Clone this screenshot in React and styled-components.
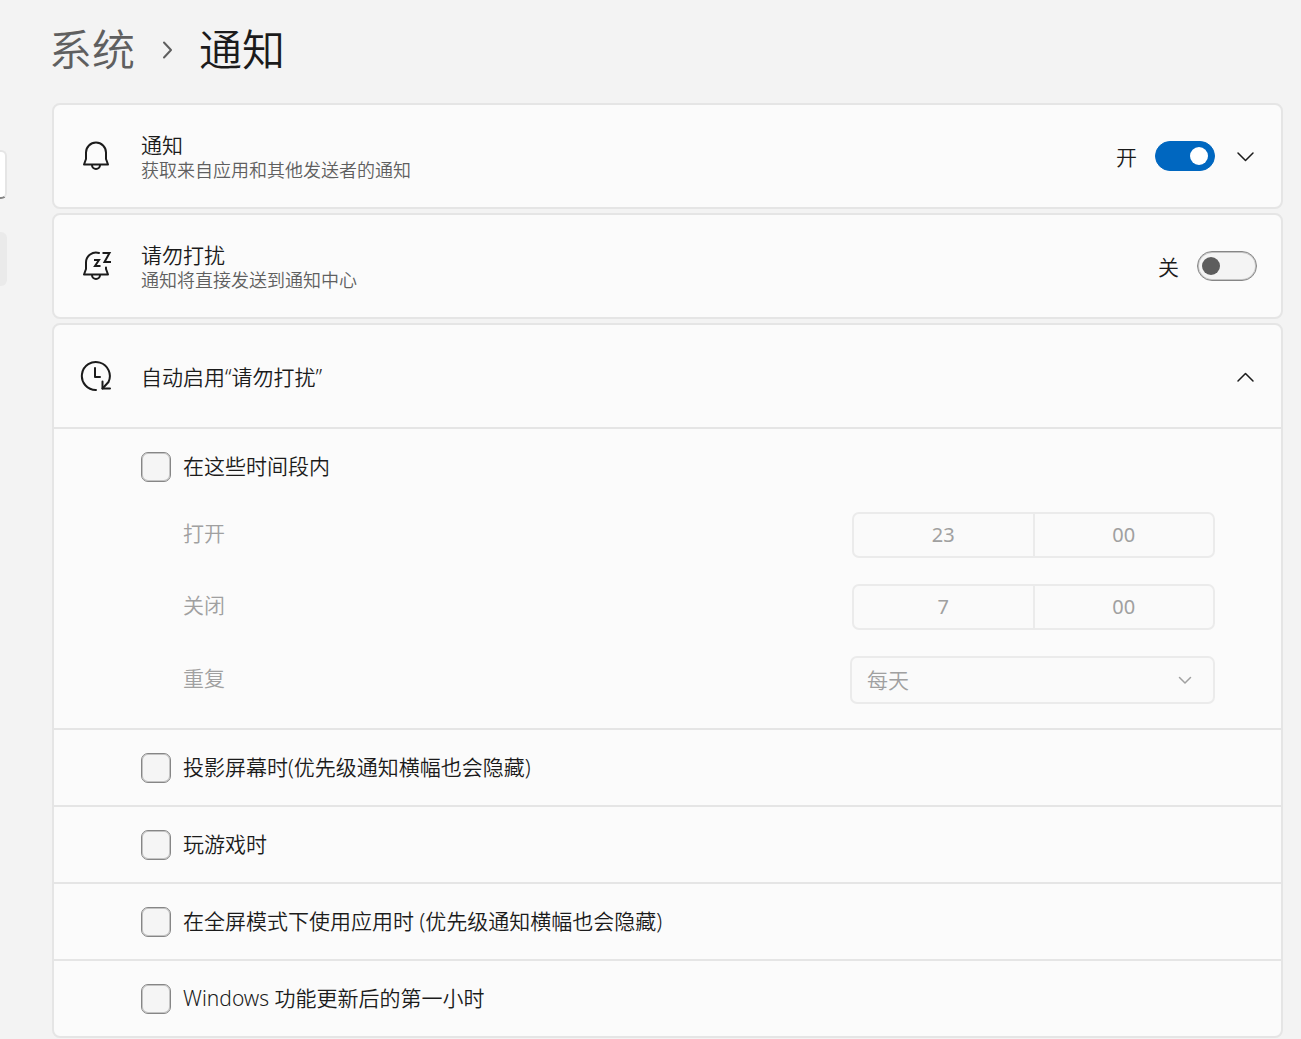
import React, { useState } from 'react';
import styled, { createGlobalStyle, css } from 'styled-components';

const GlobalStyle = createGlobalStyle`
  * {
    box-sizing: border-box;
  }
  body {
    margin: 0;
    background: #f3f3f3;
    color: #1b1b1b;
    font-family: 'Noto Sans', 'Noto Sans CJK SC', sans-serif;
    font-size: 21px;
    font-weight: 350;
  }
  button, input, select {
    font: inherit;
    color: inherit;
    margin: 0;
  }
`;

const Layout = styled.div`
  display: flex;
  min-height: 100vh;
`;

/* the navigation is collapsed, only its right edge stays visible */
const Sidebar = styled.nav`
  flex: 0 0 7px;
  display: flex;
  flex-direction: column;
  align-items: flex-end;
  gap: 33px;
  padding-top: 150px;
  overflow: hidden;
`;

const SearchBox = styled.input`
  flex: none;
  width: 240px;
  height: 49px;
  border: 2px solid #e5e5e5;
  border-bottom-color: #868686;
  border-radius: 6px;
  background: #fff;
`;

const NavItem = styled.button`
  flex: none;
  width: 240px;
  height: 54px;
  border: none;
  border-radius: 6px;
  background: #eaeaea;
`;

const Main = styled.main`
  flex: 1;
  min-width: 0;
`;

const Breadcrumb = styled.header`
  display: flex;
  align-items: center;
  gap: 20px;
  height: 103px;
  padding: 0 18px 4px 42px;
  font-size: 43px;
  line-height: 60px;
  color: #5f5f5f;
  a {
    color: inherit;
    text-decoration: none;
  }
  h1 {
    margin: 0;
    font-size: inherit;
    font-weight: inherit;
    color: #1b1b1b;
  }
`;

const Cards = styled.div`
  display: flex;
  flex-direction: column;
  gap: 4px;
  padding: 0 18px 1px 45px;
`;

const Card = styled.section`
  border: 2px solid #e5e5e5;
  border-radius: 8px;
  background: #fbfbfb;
`;

const CardHeader = styled.div`
  display: flex;
  align-items: center;
  height: 102px;
  padding: 0 24px 0 26px;
`;

const CardText = styled.div`
  flex: 1;
  margin-left: 29px;
  padding-top: 2px;
`;

const Title = styled.h2`
  margin: 0;
  font-size: 21px;
  font-weight: inherit;
  line-height: 26px;
`;

const Description = styled.p`
  margin: 0;
  font-size: 18px;
  line-height: 24px;
  color: #5f5f5f;
`;

const Actions = styled.div`
  display: flex;
  align-items: center;
  gap: 18px;
`;

const SwitchLabel = styled.label`
  display: flex;
  align-items: center;
  gap: 18px;
`;

const Switch = styled.input`
  appearance: none;
  display: flex;
  align-items: center;
  width: 60px;
  height: 30px;
  padding: 0 4px;
  border: 1px solid #868686;
  border-radius: 15px;
  background: #f4f4f4;
  box-shadow: inset 0 0 0 1px #c4c4c4;
  &::before {
    content: '';
    width: 18px;
    height: 18px;
    border-radius: 50%;
    background: #5d5d5d;
  }
  &:checked {
    justify-content: flex-end;
    padding: 0 6px;
    border-color: #0067c0;
    background: #0067c0;
    box-shadow: none;
  }
  &:checked::before {
    background: #fff;
  }
`;

const IconButton = styled.button`
  display: flex;
  padding: 0;
  border: none;
  background: none;
`;

const Row = styled.div`
  border-top: 2px solid #e5e5e5;
`;

const CheckLabel = styled.label`
  display: flex;
  align-items: center;
  gap: 12px;
  height: 75px;
  padding-left: 87px;
  span {
    padding-bottom: 4px;
  }
`;

const Checkbox = styled.input`
  appearance: none;
  width: 30px;
  height: 30px;
  border: 1px solid #868686;
  border-radius: 7px;
  background: #f5f5f5;
  box-shadow: inset 0 0 0 1px #c4c4c4;
  &:checked {
    border-color: #0067c0;
    background: #0067c0;
    box-shadow: none;
  }
`;

const Schedule = styled.div`
  display: flex;
  flex-direction: column;
  gap: 26px;
  padding: 8px 66px 24px 129px;
  color: #a0a0a0;
`;

const Field = styled.div`
  display: flex;
  align-items: center;
  justify-content: space-between;
`;

const FieldLabel = styled.label`
  padding-bottom: 7px;
`;

const control = css`
  border: 2px solid #ebebeb;
  border-radius: 7px;
  background: #fafafa;
`;

const TimePicker = styled.div`
  ${control}
  display: flex;
  width: 363px;
  height: 46px;
`;

const TimeInput = styled.input`
  flex: 1;
  min-width: 0;
  padding: 0 0 2px;
  border: none;
  background: none;
  text-align: center;
  font-size: 20px;
  font-weight: 400;
  & + & {
    border-left: 2px solid #ebebeb;
  }
`;

const SelectWrapper = styled.div`
  position: relative;
  width: 365px;
  svg {
    position: absolute;
    right: 18px;
    top: 12px;
    pointer-events: none;
  }
`;

const Select = styled.select`
  ${control}
  appearance: none;
  display: block;
  width: 100%;
  height: 48px;
  padding: 0 15px;
  opacity: 1;
`;

const Svg = styled.svg`
  flex: none;
  display: block;
  fill: none;
  stroke: currentColor;
  stroke-width: ${({ $stroke }) => $stroke || 2};
  stroke-linecap: round;
  stroke-linejoin: round;
`;

const BellIcon = () => (
  <Svg width="32" height="32" viewBox="0 0 32 32">
    <path d="M4 24.500 6 19V12.500a10 10 0 0 1 20 0V19l2 5.500z" />
    <path d="M12 25a4 4 0 0 0 8 0" />
  </Svg>
);

const SnoozeIcon = () => (
  <Svg width="32" height="32" viewBox="0 0 32 32">
    <path d="M19 3A10 10 0 0 0 6 12.500V19l-2 5.500h24L26 19v-1.500" />
    <path d="M12 25a4 4 0 0 0 8 0" />
    <path strokeLinecap="butt" strokeLinejoin="miter" d="M14 10h5l-4 6h5.500" />
    <path strokeLinecap="butt" strokeLinejoin="miter" d="M22.500 3h7L24.500 12h6.500" />
  </Svg>
);

const ClockIcon = () => (
  <Svg width="32" height="32" viewBox="0 0 32 32">
    <path d="M16 30A14 14 0 1 1 28.500 22L22.500 28.500" />
    <path d="M15 8v9h5M22.500 21.500v7h7.500" />
  </Svg>
);

const Chevron = ({ d, size = 24, stroke }) => (
  <Svg width={size} height={size} viewBox="0 0 24 24" $stroke={stroke}>
    <path d={d} />
  </Svg>
);

const conditions = [
  '投影屏幕时(优先级通知横幅也会隐藏)',
  '玩游戏时',
  '在全屏模式下使用应用时 (优先级通知横幅也会隐藏)',
  'Windows 功能更新后的第一小时',
];

const Toggle = ({ name, defaultOn }) => {
  const [on, setOn] = useState(defaultOn);

  return (
    <SwitchLabel>
      {on ? '开' : '关'}
      <Switch
        type="checkbox"
        role="switch"
        aria-label={name}
        checked={on}
        onChange={() => setOn(!on)}
      />
    </SwitchLabel>
  );
};

const TimeField = ({ id, label, hour, minute }) => (
  <Field>
    <FieldLabel htmlFor={id}>{label}</FieldLabel>
    <TimePicker>
      <TimeInput id={id} defaultValue={hour} disabled />
      <TimeInput aria-label={label} defaultValue={minute} disabled />
    </TimePicker>
  </Field>
);

const App = () => (
  <Layout>
    <GlobalStyle />
    <Sidebar>
      <SearchBox type="search" aria-label="搜索" />
      <NavItem aria-label="系统" />
    </Sidebar>
    <Main>
      <Breadcrumb>
        <a href="#system">系统</a>
        <Chevron d="M9 4.500 16 12 9 19.500" stroke={2} />
        <h1>通知</h1>
      </Breadcrumb>
      <Cards>
        <Card>
          <CardHeader>
            <BellIcon />
            <CardText>
              <Title>通知</Title>
              <Description>获取来自应用和其他发送者的通知</Description>
            </CardText>
            <Actions>
              <Toggle name="通知" defaultOn />
              <IconButton aria-label="展开">
                <Chevron d="M5 9 12.500 16.500 20 9" stroke={1.5} />
              </IconButton>
            </Actions>
          </CardHeader>
        </Card>
        <Card>
          <CardHeader>
            <SnoozeIcon />
            <CardText>
              <Title>请勿打扰</Title>
              <Description>通知将直接发送到通知中心</Description>
            </CardText>
            <Actions>
              <Toggle name="请勿打扰" defaultOn={false} />
            </Actions>
          </CardHeader>
        </Card>
        <Card>
          <CardHeader>
            <ClockIcon />
            <CardText>
              <Title>自动启用“请勿打扰”</Title>
            </CardText>
            <IconButton aria-label="折叠" aria-expanded="true">
              <Chevron d="M5 17 12.500 9.500 20 17" stroke={1.5} />
            </IconButton>
          </CardHeader>
          <Row>
            <CheckLabel>
              <Checkbox type="checkbox" />
              <span>在这些时间段内</span>
            </CheckLabel>
            <Schedule>
              <TimeField id="start" label="打开" hour="23" minute="00" />
              <TimeField id="end" label="关闭" hour="7" minute="00" />
              <Field>
                <FieldLabel htmlFor="repeat">重复</FieldLabel>
                <SelectWrapper>
                  <Select id="repeat" disabled>
                    <option>每天</option>
                  </Select>
                  <Chevron d="M6.500 9.500 12 15 17.500 9.500" stroke={1.5} />
                </SelectWrapper>
              </Field>
            </Schedule>
          </Row>
          {conditions.map((text) => (
            <Row key={text}>
              <CheckLabel>
                <Checkbox type="checkbox" />
                <span>{text}</span>
              </CheckLabel>
            </Row>
          ))}
        </Card>
      </Cards>
    </Main>
  </Layout>
);

export default App;
